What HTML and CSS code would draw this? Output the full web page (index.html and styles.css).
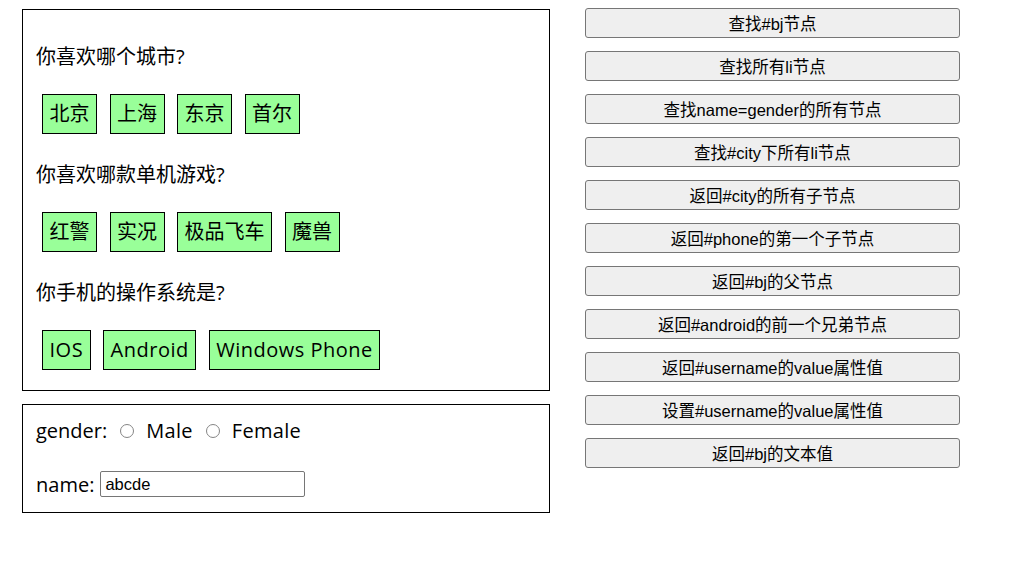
FILE: index.html
```html
<!DOCTYPE html>
<html lang="zh-CN">
<head>
<meta charset="utf-8">
<title>DOM 查询练习</title>
<link rel="stylesheet" href="styles.css">
</head>
<body>
<div class="page">
  <div class="left">
    <div class="inner box1">
      <p class="q q-first">你喜欢哪个城市?</p>
      <ul class="opts" id="city">
        <li id="bj">北京</li>
        <li>上海</li>
        <li>东京</li>
        <li>首尔</li>
      </ul>
      <p class="q">你喜欢哪款单机游戏?</p>
      <ul class="opts" id="game">
        <li id="rl">红警</li>
        <li>实况</li>
        <li>极品飞车</li>
        <li>魔兽</li>
      </ul>
      <p class="q">你手机的操作系统是?</p>
      <ul class="opts opts-latin" id="phone">
        <li>IOS</li>
        <li id="android">Android</li>
        <li>Windows Phone</li>
      </ul>
    </div>
    <div class="inner box2">
      <div class="gender-row">
        <span class="lbl">gender:</span>
        <input class="radio" type="radio" name="gender" value="male">
        <span class="opt">Male</span>
        <input class="radio" type="radio" name="gender" value="female">
        <span class="opt">Female</span>
      </div>
      <div class="name-row">
        <span class="lbl">name:</span>
        <input class="text" type="text" name="name" id="username" value="abcde">
      </div>
    </div>
  </div>
  <div class="btns" id="btnList">
    <button class="btn">查找#bj节点</button>
    <button class="btn">查找所有li节点</button>
    <button class="btn">查找name=gender的所有节点</button>
    <button class="btn">查找#city下所有li节点</button>
    <button class="btn">返回#city的所有子节点</button>
    <button class="btn">返回#phone的第一个子节点</button>
    <button class="btn">返回#bj的父节点</button>
    <button class="btn">返回#android的前一个兄弟节点</button>
    <button class="btn">返回#username的value属性值</button>
    <button class="btn">设置#username的value属性值</button>
    <button class="btn">返回#bj的文本值</button>
  </div>
</div>
</body>
</html>
```

FILE: styles.css
```css
html, body {
  margin: 0;
  padding: 0;
  background: #ffffff;
}

body {
  font-family: "Open Sans", "Noto Sans CJK SC", sans-serif;
  font-size: 20px;
  color: #000000;
}

.page {
  display: flex;
  align-items: flex-start;
  padding: 9px 0 0 22px;
}

.left {
  display: flex;
  flex-direction: column;
  gap: 13px;
}

.inner {
  width: 500px;
  border: 1px solid #000000;
}

.box1 {
  padding: 13px 13px 20px 13px;
}

.q {
  margin: 27px 0 0 0;
  height: 27px;
  line-height: 27px;
  white-space: nowrap;
}

.q-first {
  margin-top: 20px;
}

.opts {
  list-style: none;
  margin: 24px 0 0 6px;
  padding: 0;
  display: flex;
  gap: 12.5px;
}

.opts li {
  height: 26px;
  line-height: 26px;
  padding: 6px 6.5px;
  border: 1px solid #000000;
  background: #99ff99;
  white-space: nowrap;
}

.opts-latin li {
  letter-spacing: 0.5px;
}

.box2 {
  padding: 12px 13px 14px 13px;
}

.gender-row {
  display: flex;
  align-items: center;
  height: 27px;
  line-height: 27px;
}

.opt {
  letter-spacing: 0.3px;
}

.radio {
  appearance: none;
  -webkit-appearance: none;
  box-sizing: border-box;
  width: 14px;
  height: 14px;
  margin: 0 12px 0 13px;
  border: 1px solid #858585;
  border-radius: 50%;
  background: #ffffff;
}

.name-row {
  display: flex;
  align-items: center;
  height: 28px;
  margin-top: 26px;
}

.text {
  box-sizing: border-box;
  width: 205px;
  height: 26px;
  margin: 0 0 0 6px;
  padding: 0 4px;
  border: 1px solid #767676;
  border-radius: 2px;
  font-family: "Liberation Sans", "Noto Sans CJK SC", sans-serif;
  font-size: 16.5px;
  color: #000000;
  background: #ffffff;
}

.btns {
  display: flex;
  flex-direction: column;
  gap: 13px;
  margin: -1px 0 0 35px;
}

.btn {
  box-sizing: border-box;
  width: 375px;
  height: 30px;
  margin: 0;
  padding: 2px 0 0 0;
  border: 1px solid #767676;
  border-radius: 3px;
  background: #efefef;
  font-family: "Liberation Sans", "Noto Sans CJK SC", sans-serif;
  font-size: 16.5px;
  color: #000000;
  text-align: center;
  line-height: 26px;
}
```
